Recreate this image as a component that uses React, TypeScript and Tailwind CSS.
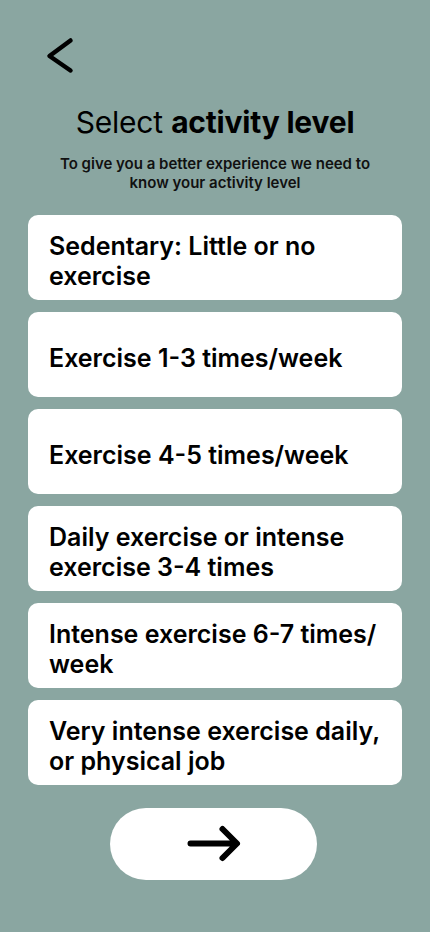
const LEVELS = [
  'Sedentary: Little or no exercise',
  'Exercise 1-3 times/week',
  'Exercise 4-5 times/week',
  'Daily exercise or intense exercise 3-4 times',
  'Intense exercise 6-7 times/ week',
  'Very intense exercise daily, or physical job',
];

export default function App() {
  return (
    <div
      className="min-h-[932px] w-[430px] bg-[#8aa6a1] flex flex-col px-7 text-black"
      style={{ fontFamily: 'Inter, "Noto Sans", sans-serif' }}
    >
      {/* Back */}
      <div className="pt-[34px] pl-[10px]">
        <svg width="40" height="42" viewBox="0 0 40 42" fill="none" className="block">
          <path d="M32.5 6.5 L11.5 22 L32.5 36.5" stroke="black" strokeWidth="4.5" strokeLinecap="round" strokeLinejoin="round" />
        </svg>
      </div>

      {/* Header */}
      <div className="text-center mt-[28px]">
        <h1 className="text-[30px] leading-[36px] tracking-[-0.2px]">
          Select <span className="font-bold">activity level</span>
        </h1>
        <p className="text-[15px] leading-[19px] font-semibold text-[#111] mt-[14px] mx-auto max-w-[340px]">
          To give you a better experience we need to know your activity level
        </p>
      </div>

      {/* Options */}
      <div className="flex flex-col gap-3 mt-[23px]">
        {LEVELS.map((label) => (
          <button
            key={label}
            className="bg-white rounded-[10px] h-[85px] pl-[21px] pr-3 text-left flex items-center"
          >
            <span className="text-[25px] leading-[30px] font-semibold pt-[7px]">{label}</span>
          </button>
        ))}
      </div>

      {/* Next */}
      <div className="flex justify-center mt-[23px] pr-[3px]">
        <button className="w-[207px] h-[72px] rounded-full bg-white flex items-center justify-center">
          <svg width="60" height="44" viewBox="0 0 60 44" fill="none">
            <path d="M6.5 21.5 H52 M38.5 7 L53 21.5 L38.5 36" stroke="black" strokeWidth="6" strokeLinecap="round" strokeLinejoin="round" />
          </svg>
        </button>
      </div>
    </div>
  );
}
